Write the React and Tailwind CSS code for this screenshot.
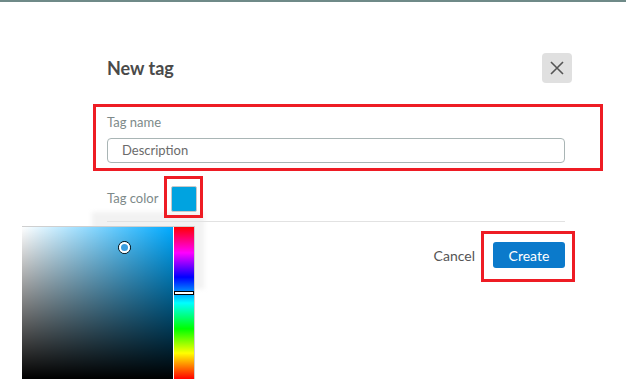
import React from "react";

function ColorPicker() {
  return (
    <div className="absolute left-[22px] top-[226px] flex gap-[1px] bg-white border-t border-r border-[#cfcfcf]">
      {/* saturation / value square */}
      <div className="relative w-[151px] h-[152px] bg-[#00aaff]">
        <div className="absolute inset-0 bg-gradient-to-r from-white to-transparent" />
        <div className="absolute inset-0 bg-gradient-to-b from-transparent to-black" />
        <div className="absolute left-[96px] top-[14px] w-[13px] h-[13px] rounded-full border border-black">
          <div className="w-full h-full rounded-full border-2 border-white bg-[#3a9ee0]" />
        </div>
      </div>
      {/* hue bar */}
      <div className="relative w-[20px] h-[152px] bg-[linear-gradient(to_bottom,#ff0000_0%,#ff00ff_17%,#0000ff_33%,#00ffff_50%,#00ff00_67%,#ffff00_83%,#ff0000_100%)]">
        <div className="absolute left-0 right-0 top-[64px] h-[4px] bg-white border border-black" />
      </div>
    </div>
  );
}

export default function App() {
  return (
    <div className="relative w-[626px] h-[391px] bg-white overflow-hidden font-['Lato','Noto_Sans',sans-serif]">
      <div className="h-[2px] bg-[#6f8a88]" />

      {/* popup shadow behind picker */}
      <div className="absolute left-[92px] top-[212px] w-[112px] h-[77px] bg-[#f2f2f2] blur-[2px]" />

      <div className="relative ml-[107px] w-[465px] pt-[51px]">
        {/* header */}
        <div className="flex items-center justify-between">
          <h1 className="text-[18px] font-bold text-[#4a4a4a] leading-[30px]">New tag</h1>
          <button className="w-[30px] h-[30px] rounded-[4px] bg-[#e0e0e0] flex items-center justify-center">
            <svg width="16" height="16" viewBox="0 0 16 16" fill="none" stroke="#555" strokeWidth="1.6">
              <path d="M2 2L14 14M14 2L2 14" />
            </svg>
          </button>
        </div>

        <div className="pr-[7px]">
          {/* tag name */}
          <div className="mt-[32px] text-[13px] leading-[15px] text-[#7d8a8a]">Tag name</div>
          <div className="mt-[8px] h-[25px] rounded-[4px] border border-[#a9b5b5] flex items-center pl-[14px] pt-[1px] text-[13px] text-[#6b6b6b]">
            Description
          </div>

          {/* tag color */}
          <div className="mt-[23px] flex items-center gap-[13px]">
            <span className="text-[13px] text-[#7d8a8a]">Tag color</span>
            <div className="w-[26px] h-[26px] rounded-[2px] border border-[#c8c8c8] bg-[#00a3e0]" />
          </div>
          <div className="mt-[9px] h-px bg-[#e2e2e2]" />

          {/* footer */}
          <div className="mt-[20px] flex items-center justify-end gap-[18px]">
            <span className="text-[14px] text-[#555]">Cancel</span>
            <button className="w-[72px] h-[26px] rounded-[3px] bg-[#0b7acb] text-white text-[14px]">Create</button>
          </div>
        </div>
      </div>

      <ColorPicker />

      {/* annotation boxes */}
      <div className="absolute left-[93px] top-[104px] w-[510px] h-[67px] border-[3px] border-[#ee1c24]" />
      <div className="absolute left-[164px] top-[176px] w-[39px] h-[42px] border-[3px] border-[#ee1c24]" />
      <div className="absolute left-[481px] top-[231px] w-[94px] h-[51px] border-[3px] border-[#ee1c24]" />
    </div>
  );
}
